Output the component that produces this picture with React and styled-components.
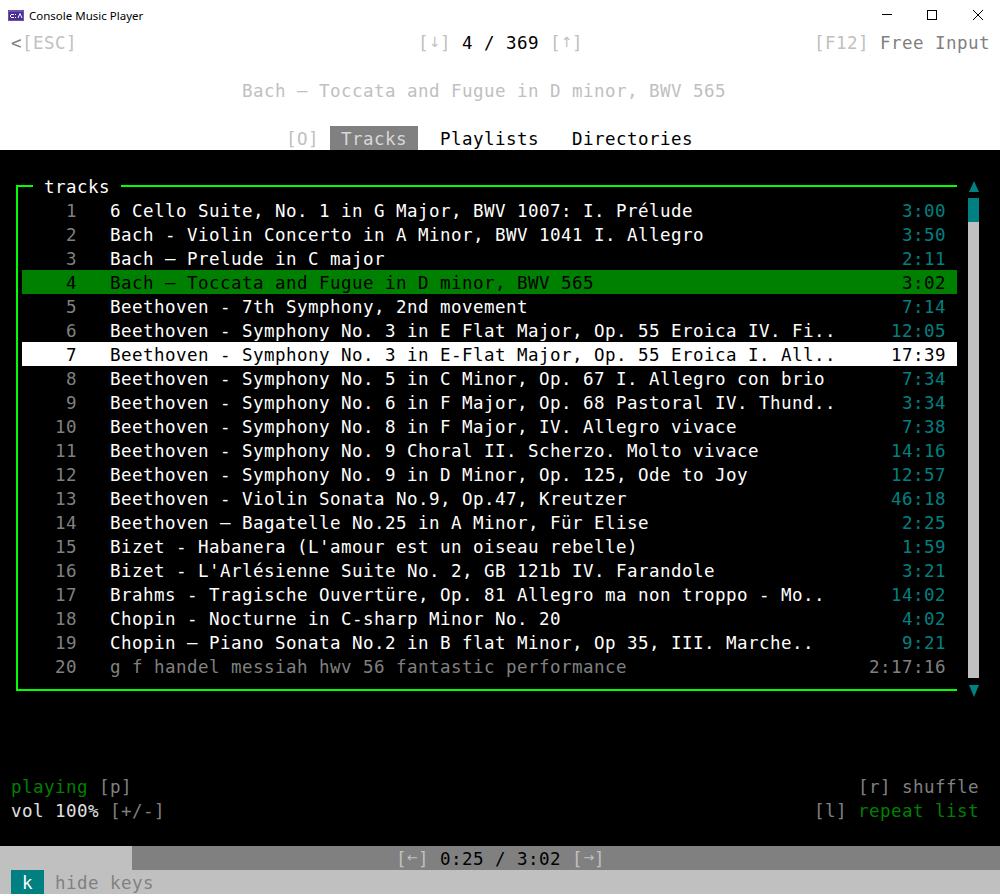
import styled, { createGlobalStyle } from 'styled-components';

const GlobalStyle = createGlobalStyle`
  html, body {
    margin: 0;
    padding: 0;
    background: #000;
  }
`;

const CELL = 11;
const LINE = '26px';

const tracks = [
  ['6 Cello Suite, No. 1 in G Major, BWV 1007: I. Prélude', '3:00'],
  ['Bach - Violin Concerto in A Minor, BWV 1041 I. Allegro', '3:50'],
  ['Bach – Prelude in C major', '2:11'],
  ['Bach – Toccata and Fugue in D minor, BWV 565', '3:02'],
  ['Beethoven - 7th Symphony, 2nd movement', '7:14'],
  ['Beethoven - Symphony No. 3 in E Flat Major, Op. 55 Eroica IV. Fi..', '12:05'],
  ['Beethoven - Symphony No. 3 in E-Flat Major, Op. 55 Eroica I. All..', '17:39'],
  ['Beethoven - Symphony No. 5 in C Minor, Op. 67 I. Allegro con brio', '7:34'],
  ['Beethoven - Symphony No. 6 in F Major, Op. 68 Pastoral IV. Thund..', '3:34'],
  ['Beethoven - Symphony No. 8 in F Major, IV. Allegro vivace', '7:38'],
  ['Beethoven - Symphony No. 9 Choral II. Scherzo. Molto vivace', '14:16'],
  ['Beethoven - Symphony No. 9 in D Minor, Op. 125, Ode to Joy', '12:57'],
  ['Beethoven - Violin Sonata No.9, Op.47, Kreutzer', '46:18'],
  ['Beethoven – Bagatelle No.25 in A Minor, Für Elise', '2:25'],
  ["Bizet - Habanera (L'amour est un oiseau rebelle)", '1:59'],
  ["Bizet - L'Arlésienne Suite No. 2, GB 121b IV. Farandole", '3:21'],
  ['Brahms - Tragische Ouvertüre, Op. 81 Allegro ma non troppo - Mo..', '14:02'],
  ['Chopin - Nocturne in C-sharp Minor No. 20', '4:02'],
  ['Chopin – Piano Sonata No.2 in B flat Minor, Op 35, III. Marche..', '9:21'],
  ['g f handel messiah hwv 56 fantastic performance', '2:17:16'],
];

const Screen = styled.div`
  width: 1000px;
  height: 894px;
  display: flex;
  flex-direction: column;
  overflow: hidden;
  background: #000;
  font-family: "DejaVu Sans Mono", "Liberation Mono", monospace;
  font-size: 17.5px;
  letter-spacing: 0.465px;
  white-space: pre;
`;

const TitleBar = styled.div`
  height: 30px;
  background: #fff;
  display: flex;
  align-items: center;
  padding-left: 8px;
  color: #000;
  font-family: "Noto Sans", sans-serif;
  font-size: 11.5px;
  letter-spacing: 0;
`;

const AppName = styled.span`
  margin-left: 5px;
  flex: 1;
`;

const WindowButton = styled.svg`
  width: 10px;
  height: 10px;
  margin-right: ${(p) => p.$gap}px;
`;

const Header = styled.div`
  background: #fff;
  display: flex;
  flex-direction: column;
`;

const Line = styled.div`
  height: 24px;
  line-height: ${LINE};
  display: flex;
  padding-left: ${(p) => (p.$indent || 0) * CELL}px;
`;

const Cols = styled.span`
  display: inline-block;
  width: ${(p) => p.$n * CELL}px;
  flex: none;
`;

const Txt = styled.span`
  color: ${(p) => p.$c || '#000'};
`;

const ArrowKey = styled.span`
  display: inline-block;
  width: ${CELL}px;
  height: 24px;
  line-height: 24px;
  vertical-align: top;
  text-align: center;
  font-family: "DejaVu Sans", sans-serif;
  font-size: ${(p) => p.$size}px;
  letter-spacing: 0;
  color: #c0c0c0;
`;

const Tab = styled.span`
  width: ${(p) => p.$n * CELL}px;
  flex: none;
  padding-left: ${(p) => (p.$active ? CELL : 0)}px;
  box-sizing: border-box;
  background: ${(p) => (p.$active ? '#808080' : 'transparent')};
  color: ${(p) => (p.$active ? '#d8d8d8' : '#000')};
`;

const Main = styled.div`
  flex: 1;
  display: flex;
  flex-direction: column;
  min-height: 0;
`;

const ListArea = styled.div`
  display: flex;
  align-items: flex-start;
  margin-top: 31px;
  padding-left: 16px;
`;

const Box = styled.div`
  position: relative;
  width: 941px;
  box-sizing: border-box;
  margin-top: 4px;
  padding: 11px 0 11px 4px;
  border-left: 2px solid #00ff00;
  border-top: 2px solid #00ff00;
  border-bottom: 2px solid #00ff00;
`;

const Legend = styled.span`
  position: absolute;
  top: -13px;
  left: 15px;
  height: 24px;
  line-height: ${LINE};
  padding: 0 11px;
  background: #000;
  color: #fff;
`;

const Row = styled.div`
  display: flex;
  height: 24px;
  line-height: ${LINE};
  background: ${(p) => (p.$mode === 'current' ? '#008000' : p.$mode === 'selected' ? '#fff' : 'transparent')};
  color: ${(p) => (p.$mode === 'current' || p.$mode === 'selected' ? '#000' : p.$mode === 'played' ? '#808080' : '#fff')};
`;

const Num = styled.span`
  width: 55px;
  flex: none;
  text-align: right;
  color: ${(p) => (p.$mode === 'current' || p.$mode === 'selected' ? '#000' : '#808080')};
`;

const Title = styled.span`
  margin-left: 33px;
  flex: 1;
`;

const Time = styled.span`
  margin-right: 11px;
  color: ${(p) => (p.$mode === 'current' || p.$mode === 'selected' ? '#000' : p.$mode === 'played' ? '#808080' : '#008080')};
`;

const Scroll = styled.div`
  width: 11px;
  margin-left: 11px;
  display: flex;
  flex-direction: column;
  align-items: center;
`;

const Arrow = styled.div`
  width: 0;
  height: 0;
  border-left: 5.5px solid transparent;
  border-right: 5.5px solid transparent;
  border-bottom: ${(p) => (p.$down ? '0' : '11px solid #008080')};
  border-top: ${(p) => (p.$down ? '12px solid #008080' : '0')};
`;

const Thumb = styled.div`
  width: 11px;
  height: 24px;
  margin-top: 6px;
  background: #008080;
`;

const Track = styled.div`
  width: 11px;
  height: 456px;
  margin-bottom: 7px;
  background: #c0c0c0;
`;

const Status = styled.div`
  margin-top: 77px;
  display: flex;
  justify-content: space-between;
  padding: 0 21px 0 11px;
`;

const StatusCol = styled.div`
  display: flex;
  flex-direction: column;
  align-items: ${(p) => (p.$right ? 'flex-end' : 'flex-start')};
`;

const StatusLine = styled.div`
  height: 24px;
  line-height: ${LINE};
`;

const Progress = styled.div`
  margin-top: 24px;
  height: 24px;
  line-height: ${LINE};
  background: #808080;
  position: relative;
  display: flex;
  padding-left: ${36 * CELL}px;
`;

const ProgressFill = styled.div`
  position: absolute;
  left: 0;
  top: 0;
  bottom: 0;
  background: #c0c0c0;
`;

const ProgressText = styled.span`
  position: relative;
`;

const Footer = styled.div`
  height: 24px;
  line-height: ${LINE};
  background: #c0c0c0;
  display: flex;
  padding-left: 11px;
`;

const KeyCap = styled.span`
  width: 33px;
  text-align: center;
  background: #008080;
  color: #fff;
`;

const KeyLabel = styled.span`
  margin-left: 11px;
  color: #808080;
`;

function ConsoleIcon() {
  return (
    <svg width="16" height="11" viewBox="0 0 16 11">
      <rect width="16" height="11" fill="#6a55a8" />
      <rect x="1" y="2" width="14" height="8" fill="#4b2e91" />
      <rect x="3" y="4" width="3" height="1" fill="#fff" />
      <rect x="2" y="5" width="1" height="2" fill="#fff" />
      <rect x="3" y="7" width="3" height="1" fill="#fff" />
      <rect x="7" y="4" width="1" height="1" fill="#fff" />
      <rect x="7" y="7" width="1" height="1" fill="#fff" />
      <path d="M10 8 L12 3.5 L14 8" stroke="#fff" strokeWidth="1" fill="none" />
    </svg>
  );
}

function App() {
  return (
    <>
      <GlobalStyle />
      <Screen>
        <TitleBar>
          <ConsoleIcon />
          <AppName>Console Music Player</AppName>
          <WindowButton viewBox="0 0 10 10" $gap={35}>
            <path d="M0 4.5 H10" stroke="#000" strokeWidth="1" />
          </WindowButton>
          <WindowButton viewBox="0 0 10 10" $gap={36}>
            <rect x="0.5" y="0.5" width="9" height="9" fill="none" stroke="#000" strokeWidth="1" />
          </WindowButton>
          <WindowButton viewBox="0 0 10 10" $gap={17}>
            <path d="M0 0 L10 10 M10 0 L0 10" stroke="#000" strokeWidth="1" />
          </WindowButton>
        </TitleBar>

        <Header>
          <Line $indent={1}>
            <Cols $n={37}><Txt $c="#808080">&lt;</Txt><Txt $c="#c0c0c0">[ESC]</Txt></Cols>
            <Cols $n={36}>
              <Txt $c="#c0c0c0">[</Txt><ArrowKey $size={14}>↓</ArrowKey><Txt $c="#c0c0c0">]</Txt> <Txt>4 / 369</Txt> <Txt $c="#c0c0c0">[</Txt><ArrowKey $size={14}>↑</ArrowKey><Txt $c="#c0c0c0">]</Txt>
            </Cols>
            <Cols $n={6}><Txt $c="#c0c0c0">[F12]</Txt></Cols>
            <Cols $n={10}><Txt $c="#808080">Free Input</Txt></Cols>
          </Line>
          <Line />
          <Line $indent={22}>
            <Txt $c="#c0c0c0">Bach – Toccata and Fugue in D minor, BWV 565</Txt>
          </Line>
          <Line />
          <Line $indent={26}>
            <Cols $n={4}><Txt $c="#c0c0c0">[O]</Txt></Cols>
            <Tab $n={8} $active>Tracks</Tab>
            <Cols $n={2} />
            <Tab $n={12}>Playlists</Tab>
            <Tab $n={11}>Directories</Tab>
          </Line>
        </Header>

        <Main>
          <ListArea>
            <Box>
              <Legend>tracks</Legend>
              {tracks.map(([name, time], i) => {
                const mode = i === 3 ? 'current' : i === 6 ? 'selected' : i === 19 ? 'played' : undefined;
                return (
                  <Row key={i} $mode={mode}>
                    <Num $mode={mode}>{i + 1}</Num>
                    <Title>{name}</Title>
                    <Time $mode={mode}>{time}</Time>
                  </Row>
                );
              })}
            </Box>
            <Scroll>
              <Arrow />
              <Thumb />
              <Track />
              <Arrow $down />
            </Scroll>
          </ListArea>

          <Status>
            <StatusCol>
              <StatusLine><Txt $c="#008000">playing</Txt> <Txt $c="#808080">[p]</Txt></StatusLine>
              <StatusLine><Txt $c="#e0e0e0">vol 100%</Txt> <Txt $c="#808080">[+/-]</Txt></StatusLine>
            </StatusCol>
            <StatusCol $right>
              <StatusLine><Txt $c="#808080">[r] shuffle</Txt></StatusLine>
              <StatusLine><Txt $c="#808080">[l]</Txt> <Txt $c="#008000">repeat list</Txt></StatusLine>
            </StatusCol>
          </Status>

          <Progress>
            <ProgressFill style={{ width: `${12 * CELL}px` }} />
            <ProgressText>
              <Txt $c="#c0c0c0">[</Txt><ArrowKey $size={13}>←</ArrowKey><Txt $c="#c0c0c0">]</Txt> <Txt>0:25 / 3:02</Txt> <Txt $c="#c0c0c0">[</Txt><ArrowKey $size={13}>→</ArrowKey><Txt $c="#c0c0c0">]</Txt>
            </ProgressText>
          </Progress>
          <Footer>
            <KeyCap>k</KeyCap>
            <KeyLabel>hide keys</KeyLabel>
          </Footer>
        </Main>
      </Screen>
    </>
  );
}

export default App;
